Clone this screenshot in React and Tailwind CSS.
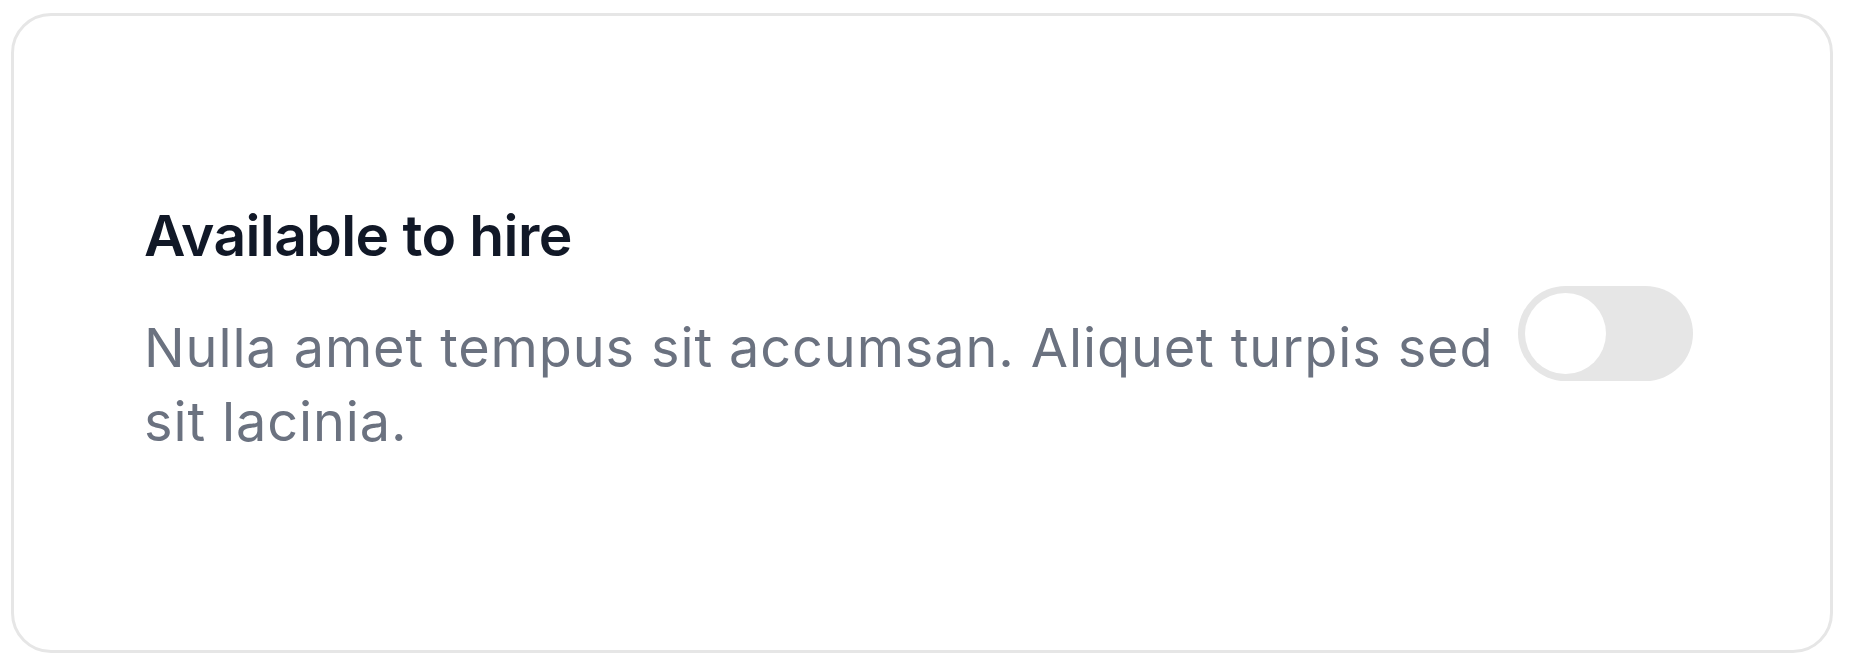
export default function App() {
  return (
    <div className="w-[1849px] h-[669px] bg-white pt-[13px] pl-[11px] pr-[16px]" style={{ fontFamily: "Inter, 'Noto Sans', sans-serif" }}>
      <div className="h-[640px] rounded-[40px] border-[3px] border-[#e6e6e6] bg-white flex items-center gap-[24px] pl-[130px] pr-[137px]">
        <div className="flex-1 pb-[11px]">
          <h2 className="text-[57px] leading-[80px] font-semibold tracking-[-0.6px] text-[#111827]">Available to hire</h2>
          <p className="mt-[35px] text-[54px] leading-[74px] tracking-[0.9px] text-[#6b7280]">
            Nulla amet tempus sit accumsan. Aliquet turpis sed sit lacinia.
          </p>
        </div>
        <button type="button" className="relative w-[175px] h-[95px] rounded-full bg-[#e6e6e6] shrink-0">
          <span className="absolute left-[7px] top-[7px] w-[81px] h-[81px] rounded-full bg-white" />
        </button>
      </div>
    </div>
  );
}
